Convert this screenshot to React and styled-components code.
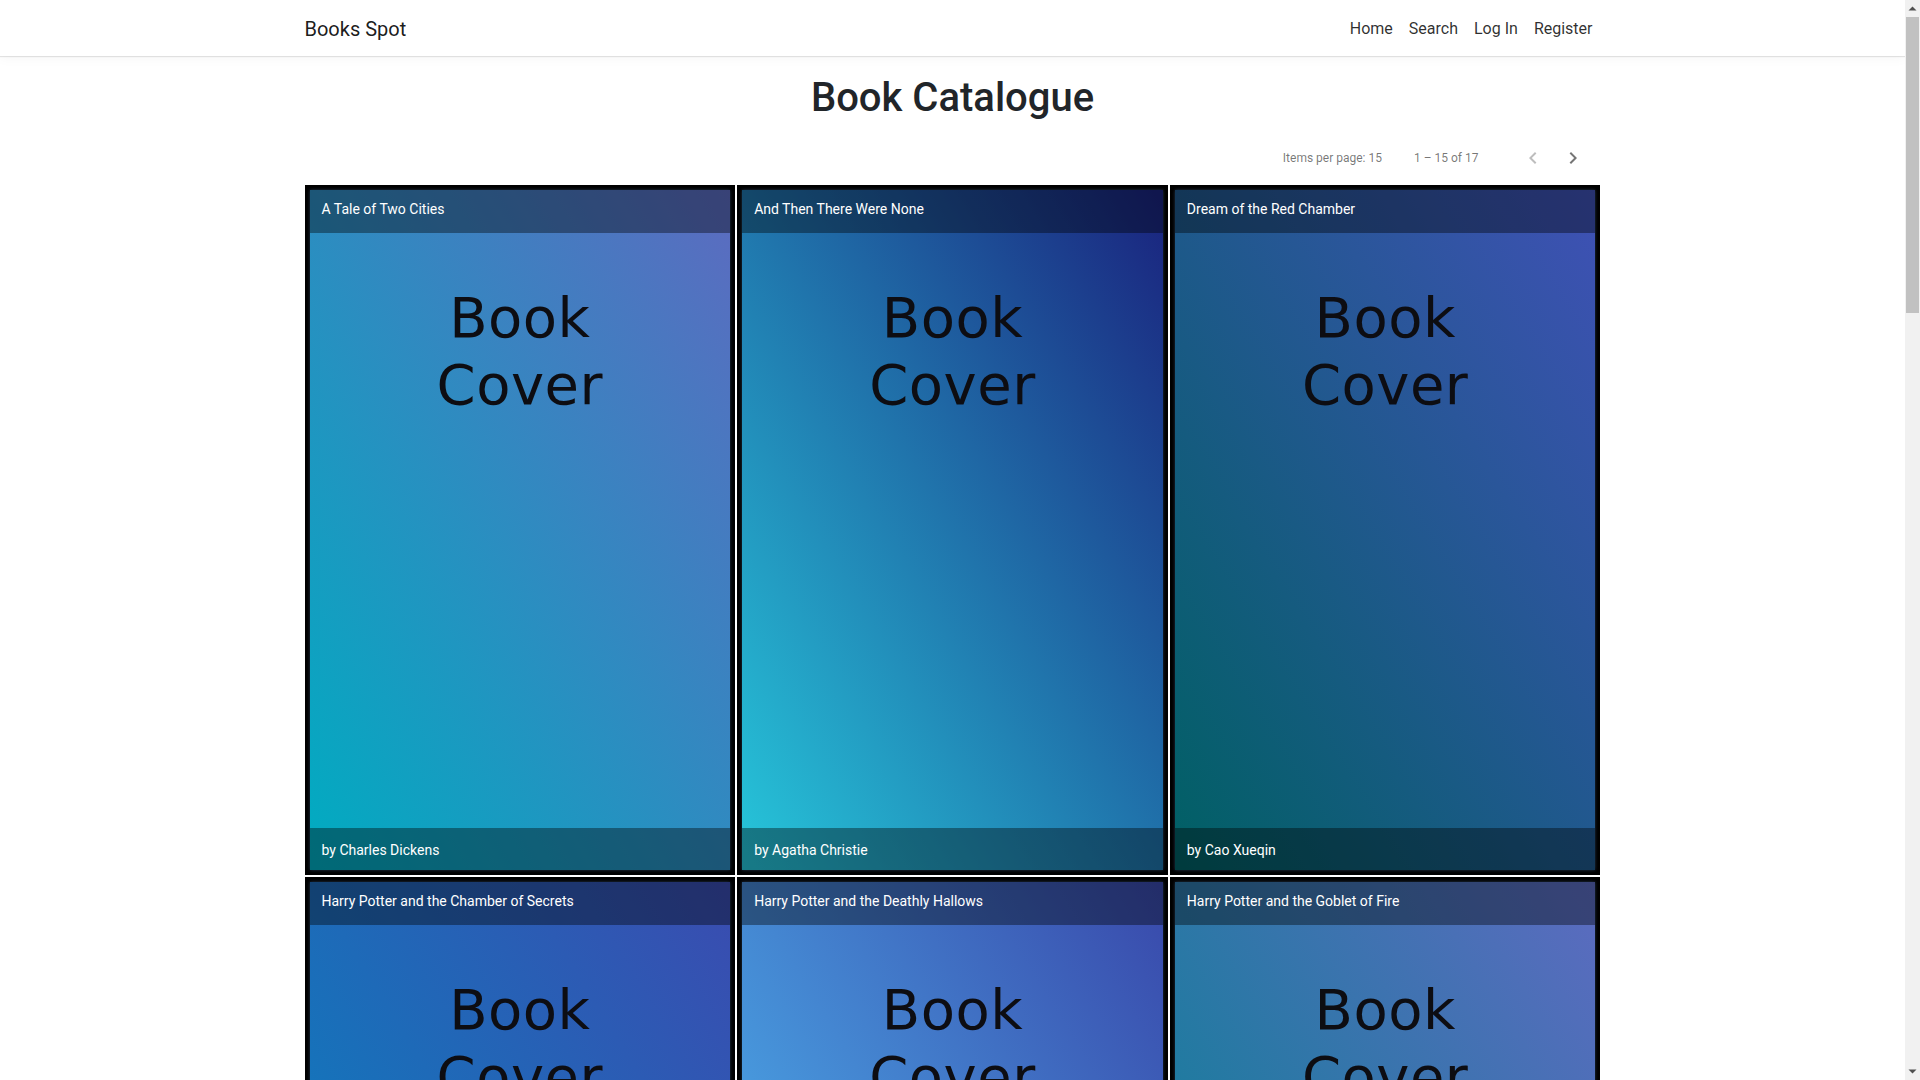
import styled, { createGlobalStyle } from 'styled-components';

const GlobalStyle = createGlobalStyle`
  html, body {
    padding: 0;
    background: #fff;
  }
  html {
    margin: 0;
  }
  body {
    margin: 0 15px 0 0;
    font-family: Roboto, "Liberation Sans", Arial, sans-serif;
    color: #212529;
  }
  * {
    box-sizing: border-box;
  }
`;

const books = [
  { id: 1, title: 'A Tale of Two Cities', author: 'Charles Dickens', from: '#00acc1', to: '#5c6bc0' },
  { id: 2, title: 'And Then There Were None', author: 'Agatha Christie', from: '#26c6da', to: '#1a237e' },
  { id: 3, title: 'Dream of the Red Chamber', author: 'Cao Xueqin', from: '#006064', to: '#3f51b5' },
  { id: 4, title: 'Harry Potter and the Chamber of Secrets', author: 'J. K. Rowling', from: '#0288c0', to: '#3a4cb0' },
  { id: 5, title: 'Harry Potter and the Deathly Hallows', author: 'J. K. Rowling', from: '#4fc3f7', to: '#3949ab' },
  { id: 6, title: 'Harry Potter and the Goblet of Fire', author: 'J. K. Rowling', from: '#00838f', to: '#5c6bc0' },
  { id: 7, title: 'Harry Potter and the Half-Blood Prince', author: 'J. K. Rowling', from: '#00acc1', to: '#283593' },
  { id: 8, title: 'Harry Potter and the Order of the Phoenix', author: 'J. K. Rowling', from: '#0097a7', to: '#3f51b5' },
  { id: 9, title: "Harry Potter and the Philosopher's Stone", author: 'J. K. Rowling', from: '#26c6da', to: '#5c6bc0' },
  { id: 10, title: 'Harry Potter and the Prisoner of Azkaban', author: 'J. K. Rowling', from: '#006064', to: '#303f9f' },
  { id: 11, title: 'Le Petit Prince', author: 'Antoine de Saint-Exupéry', from: '#0288d1', to: '#1a237e' },
  { id: 12, title: 'She: A History of Adventure', author: 'H. Rider Haggard', from: '#4dd0e1', to: '#3949ab' },
  { id: 13, title: 'The Da Vinci Code', author: 'Dan Brown', from: '#00838f', to: '#3f51b5' },
  { id: 14, title: 'The Hobbit', author: 'J. R. R. Tolkien', from: '#00acc1', to: '#5c6bc0' },
  { id: 15, title: 'The Lord of the Rings', author: 'J. R. R. Tolkien', from: '#0277bd', to: '#283593' },
];

const Navbar = styled.nav`
  height: 56px;
  background: #fff;
  box-shadow: 0 1px 1px rgba(0, 0, 0, 0.1), 0 2px 12px rgba(0, 0, 0, 0.04);
  position: relative;
  z-index: 1;
`;

const NavInner = styled.div`
  width: 1320px;
  height: 100%;
  margin: 0 auto;
  padding: 0 12px;
  display: flex;
  align-items: center;
  justify-content: space-between;
`;

const Brand = styled.a`
  font-size: 20px;
  line-height: 30px;
  color: rgba(0, 0, 0, 0.9);
  text-decoration: none;
  margin-top: 2px;
`;

const NavLinks = styled.ul`
  display: flex;
  list-style: none;
  margin: 2px 0 0;
  padding: 0;
`;

const NavLink = styled.a`
  display: block;
  padding: 8px;
  font-size: 16px;
  line-height: 24px;
  color: rgba(0, 0, 0, 0.82);
  text-decoration: none;
`;

const Main = styled.main`
  width: 1320px;
  margin: 0 auto;
  padding: 0 12px 170px;
`;

const Title = styled.h1`
  margin: 18px 0 7px;
  font-size: 40px;
  font-weight: 500;
  line-height: 1.2;
  text-align: center;
  color: #212529;
`;

const Paginator = styled.div`
  height: 56px;
  display: flex;
  align-items: center;
  justify-content: flex-end;
  padding: 1px 8px 0 0;
  font-size: 12px;
  color: rgba(0, 0, 0, 0.54);
`;

const PageSize = styled.div`
  margin-right: 32px;
`;

const RangeLabel = styled.div`
  margin-right: 34px;
`;

const PageButton = styled.button`
  width: 40px;
  height: 40px;
  border: none;
  background: transparent;
  padding: 0;
  display: flex;
  align-items: center;
  justify-content: center;
  color: ${(p) => (p.disabled ? 'rgba(0, 0, 0, 0.26)' : 'rgba(0, 0, 0, 0.54)')};
  cursor: ${(p) => (p.disabled ? 'default' : 'pointer')};
`;

const Grid = styled.div`
  display: grid;
  grid-template-columns: repeat(3, 1fr);
  grid-auto-rows: 690px;
  gap: 2px;
`;

const Tile = styled.div`
  background: #000;
  padding: 5px;
  display: flex;
`;

const Card = styled.div`
  flex: 1;
  display: flex;
  flex-direction: column;
  background: linear-gradient(to top right, ${(p) => p.from}, ${(p) => p.to});
  box-shadow: 0 0 3px rgba(70, 100, 140, 0.55);
`;

const Bar = styled.div`
  height: ${(p) => (p.footer ? '42px' : '43px')};
  flex-shrink: 0;
  display: flex;
  align-items: center;
  padding: ${(p) => (p.footer ? '1px 12px 0' : '0 12px 6px')};
  background: rgba(0, 0, 0, 0.38);
  color: #fff;
  font-size: 14px;
  white-space: nowrap;
  overflow: hidden;
`;

const Cover = styled.div`
  flex: 1;
  padding-top: 51px;
  text-align: center;
  font-family: "DejaVu Sans", Inter, sans-serif;
  font-size: 56px;
  line-height: 67px;
  letter-spacing: 0.5px;
  color: #0d0d12;
  span {
    display: block;
  }
`;

const Scrollbar = styled.div`
  position: fixed;
  top: 0;
  right: 0;
  width: 15px;
  height: 100vh;
  background: #f1f1f1;
  display: flex;
  flex-direction: column;
  align-items: center;
  z-index: 10;
`;

const ScrollArrow = styled.div`
  height: 17px;
  width: 15px;
  display: flex;
  align-items: center;
  justify-content: center;
  color: #505050;
`;

const ScrollTrack = styled.div`
  flex: 1;
  width: 100%;
  display: flex;
  flex-direction: column;
`;

const ScrollThumb = styled.div`
  height: 296px;
  margin: 0 1px;
  background: #c1c1c1;
`;

const ChevronLeft = () => (
  <svg width="24" height="24" viewBox="0 0 24 24" fill="currentColor">
    <path d="M15.41 7.41L14 6l-6 6 6 6 1.41-1.41L10.83 12z" />
  </svg>
);

const ChevronRight = () => (
  <svg width="24" height="24" viewBox="0 0 24 24" fill="currentColor">
    <path d="M10 6L8.59 7.41 13.17 12l-4.58 4.59L10 18l6-6z" />
  </svg>
);

const Triangle = ({ down }) => (
  <svg width="9" height="5" viewBox="0 0 9 5" fill="currentColor">
    <path d={down ? 'M0.5 0.5h8L4.5 4.5z' : 'M4.5 0.5l4 4h-8z'} />
  </svg>
);

const BookTile = ({ title, author, from, to }) => (
  <Tile>
    <Card from={from} to={to}>
      <Bar>{title}</Bar>
      <Cover>
        <span>Book</span>
        <span>Cover</span>
      </Cover>
      <Bar footer>by {author}</Bar>
    </Card>
  </Tile>
);

const App = () => (
  <>
    <GlobalStyle />
    <Navbar>
      <NavInner>
        <Brand href="#">Books Spot</Brand>
        <NavLinks>
          <li><NavLink href="#">Home</NavLink></li>
          <li><NavLink href="#">Search</NavLink></li>
          <li><NavLink href="#">Log In</NavLink></li>
          <li><NavLink href="#">Register</NavLink></li>
        </NavLinks>
      </NavInner>
    </Navbar>
    <Main>
      <Title>Book Catalogue</Title>
      <Paginator>
        <PageSize>Items per page: 15</PageSize>
        <RangeLabel>1 – 15 of 17</RangeLabel>
        <PageButton disabled aria-label="Previous page"><ChevronLeft /></PageButton>
        <PageButton aria-label="Next page"><ChevronRight /></PageButton>
      </Paginator>
      <Grid>
        {books.map((book) => (
          <BookTile key={book.id} {...book} />
        ))}
      </Grid>
    </Main>
    <Scrollbar aria-hidden="true">
      <ScrollArrow><Triangle /></ScrollArrow>
      <ScrollTrack>
        <ScrollThumb />
      </ScrollTrack>
      <ScrollArrow><Triangle down /></ScrollArrow>
    </Scrollbar>
  </>
);

export default App;
